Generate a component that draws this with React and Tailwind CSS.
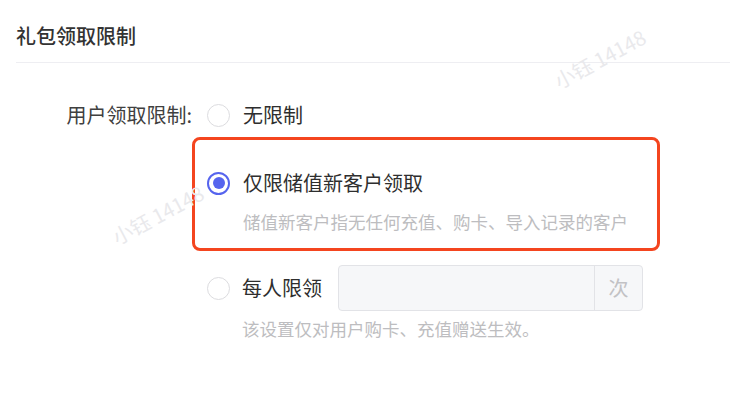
import { useState } from 'react'

function Radio({ checked }) {
  if (checked) {
    return (
      <span className="flex h-[23px] w-[23px] shrink-0 items-center justify-center rounded-full border-2 border-[#5664ee] bg-white">
        <span className="h-[12px] w-[12px] rounded-full bg-[#5664ee]" />
      </span>
    )
  }
  return <span className="block h-[23px] w-[23px] shrink-0 rounded-full border-[1.5px] border-[#dcdcdf] bg-white" />
}

function Watermark({ className }) {
  return (
    <div
      className={
        'pointer-events-none absolute -rotate-[28deg] select-none whitespace-nowrap text-[20px] text-[#e9e9ec] ' +
        className
      }
    >
      小钰 14148
    </div>
  )
}

export default function App() {
  const [limit, setLimit] = useState('new')

  return (
    <div
      className="relative h-[403px] w-[730px] overflow-hidden bg-white pl-4"
      style={{ fontFamily: '"Noto Sans CJK SC", "Noto Sans", sans-serif' }}
    >
      <div className="border-b border-[#eeeef2] pb-[12px] pt-[22px] text-[20px] font-medium leading-[28px] text-[#333]">
        礼包领取限制
      </div>

      <div className="mt-[38px] flex">
        <div className="w-[176px] text-right text-[20px] leading-[28px] text-[#404040]">用户领取限制:</div>

        <div className="ml-[15px] flex flex-col">
          <label className="flex h-[28px] cursor-pointer items-center gap-[13px]" onClick={() => setLimit('none')}>
            <Radio checked={limit === 'none'} />
            <span className="text-[20px] leading-[28px] text-[#2e2e2e]">无限制</span>
          </label>

          <div className="-ml-[15px] mt-[8px] w-[468px] rounded-[8px] border-[3px] border-[#f4451f] pb-[14px] pl-[12px] pt-[29px]">
            <label className="flex h-[28px] cursor-pointer items-center gap-[13px]" onClick={() => setLimit('new')}>
              <Radio checked={limit === 'new'} />
              <span className="text-[20px] leading-[28px] text-[#2e2e2e]">仅限储值新客户领取</span>
            </label>
            <div className="ml-[36px] mt-[13px] text-[17.5px] leading-[24px] text-[#bdbdc0]">
              储值新客户指无任何充值、购卡、导入记录的客户
            </div>
          </div>

          <div className="mt-[14px] flex items-center">
            <label className="flex cursor-pointer items-center gap-[12px]" onClick={() => setLimit('each')}>
              <Radio checked={limit === 'each'} />
              <span className="text-[20px] leading-[28px] text-[#2e2e2e]">每人限领</span>
            </label>
            <div className="ml-[16px] flex h-[46px] w-[305px] overflow-hidden rounded-[4px] border border-[#e2e3e7] bg-[#f6f7f9]">
              <input className="min-w-0 flex-1 bg-transparent px-3 outline-none" disabled />
              <span className="flex w-[48px] items-center justify-center border-l border-[#e2e3e7] text-[20px] text-[#c2c2c5]">
                次
              </span>
            </div>
          </div>
          <div className="ml-[35px] mt-[6px] text-[17.5px] leading-[24px] text-[#bdbdc0]">
            该设置仅对用户购卡、充值赠送生效。
          </div>
        </div>
      </div>

      <Watermark className="left-[550px] top-[44px]" />
      <Watermark className="left-[108px] top-[200px]" />
    </div>
  )
}
